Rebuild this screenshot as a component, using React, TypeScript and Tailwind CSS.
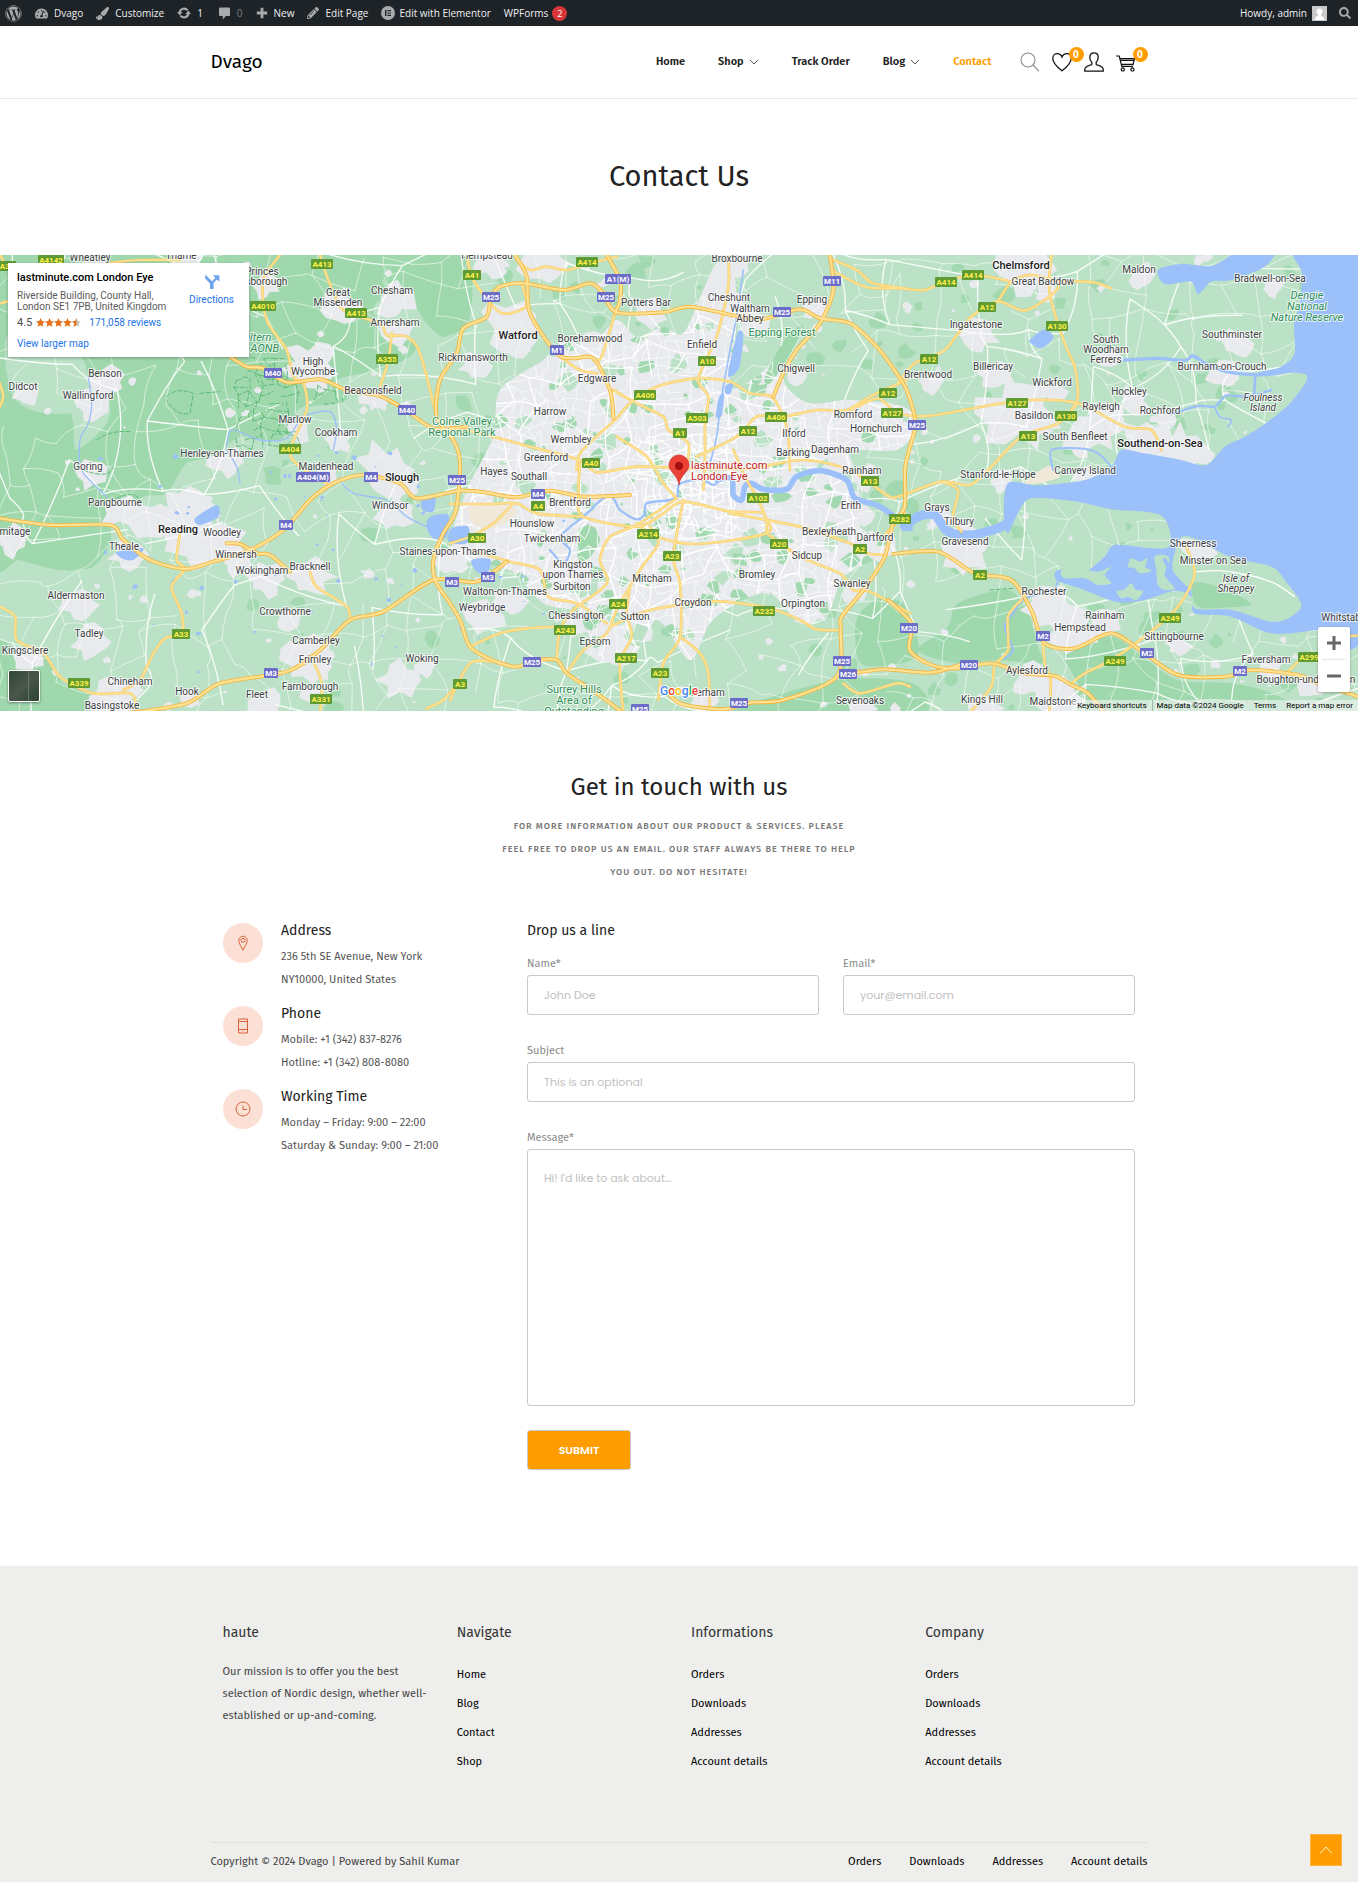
import type { ReactNode } from 'react';
import { FaWordpress, FaTachometerAlt, FaPaintBrush, FaPencilAlt, FaSearch } from 'react-icons/fa';

/* ------------------------------------------------------------------ */
/* Map drawing. Shapes use a 4074 x 1368 space, shown at a third size. */
/* ------------------------------------------------------------------ */

type Pt = [number, number];

/* The map is stored as three sheets that lie side by side. */
const WEST = 0;
const MID = 1350;
const EAST = 2694;

function pts(sheet: number, s: string): Pt[] {
  return s.split(' ').map((p) => {
    const [x, y] = p.split(',').map(Number);
    return [x + sheet, y] as Pt;
  });
}

function smooth(list: Pt[], closed = false): string {
  const n = list.length;
  const at = (i: number): Pt => (closed ? list[(i + n) % n] : list[Math.max(0, Math.min(n - 1, i))]);
  let d = `M${list[0][0]} ${list[0][1]}`;
  const last = closed ? n : n - 1;
  for (let i = 0; i < last; i++) {
    const [a, b, c, e] = [at(i - 1), at(i), at(i + 1), at(i + 2)];
    d += `C${Math.round(b[0] + (c[0] - a[0]) / 7)} ${Math.round(b[1] + (c[1] - a[1]) / 7)} ${Math.round(
      c[0] - (e[0] - b[0]) / 7,
    )} ${Math.round(c[1] - (e[1] - b[1]) / 7)} ${c[0]} ${c[1]}`;
  }
  return closed ? d + 'Z' : d;
}

function makeRandom(seed: number) {
  let s = seed;
  return () => {
    s = (s * 1664525 + 1013904223) % 4294967296;
    return s / 4294967296;
  };
}

function blob(cx: number, cy: number, r: number, rnd: () => number, n = 11): string {
  let d = '';
  for (let i = 0; i < n; i++) {
    const a = (i / n) * Math.PI * 2;
    const k = r * (0.55 + rnd() * 0.65);
    d += `${i ? 'L' : 'M'}${Math.round(cx + Math.cos(a) * k * 1.15)} ${Math.round(cy + Math.sin(a) * k)}`;
  }
  return d + 'Z';
}

function net(x0: number, y0: number, x1: number, y1: number, step: number, rnd: () => number, keep: number): string {
  const cols = Math.ceil((x1 - x0) / step) + 1;
  const rows = Math.ceil((y1 - y0) / step) + 1;
  const g: Pt[][] = [];
  for (let r = 0; r < rows; r++) {
    g.push([]);
    for (let c = 0; c < cols; c++) {
      g[r].push([
        Math.round(x0 + c * step + (rnd() - 0.5) * step * 0.9),
        Math.round(y0 + r * step + (rnd() - 0.5) * step * 0.9),
      ]);
    }
  }
  let d = '';
  const link = (a: Pt, b: Pt) => {
    if (rnd() > keep) return;
    const mx = Math.round((a[0] + b[0]) / 2 + (rnd() - 0.5) * step * 0.4);
    const my = Math.round((a[1] + b[1]) / 2 + (rnd() - 0.5) * step * 0.4);
    d += `M${a[0]} ${a[1]}Q${mx} ${my} ${b[0]} ${b[1]}`;
  };
  for (let r = 0; r < rows; r++)
    for (let c = 0; c < cols; c++) {
      if (c + 1 < cols) link(g[r][c], g[r][c + 1]);
      if (r + 1 < rows) link(g[r][c], g[r + 1][c]);
    }
  return d;
}

const london = smooth(
  pts(
    MID,
    '150,420 280,330 340,270 420,290 500,210 560,260 640,230 700,250 760,120 800,40 850,60 860,200 850,400 920,380 980,330 1010,410 1080,460 1200,450 1360,470 1400,530 1340,600 1200,600 1100,650 1220,700 1230,830 1320,870 1290,920 1180,980 1130,1100 1050,1120 960,1030 860,1060 780,1120 720,1230 620,1110 540,1240 450,1220 380,1090 280,1060 180,960 40,930 10,840 60,700 130,560',
  ),
  true,
);

const darkLand: string[] = [
  smooth(pts(WEST, '0,0 1130,0 1150,100 1250,280 1170,350 1010,390 1040,450 900,480 840,570 720,560 640,620 560,640 500,730 430,740 340,800 330,880 280,950 180,960 60,930 -20,900 -20,0'), true),
  smooth(pts(WEST, '1150,0 1390,0 1410,200 1330,260 1260,200 1190,150'), true),
  smooth(pts(WEST, '-20,1180 60,1200 130,1215 190,1300 280,1330 230,1390 -20,1400'), true),
  smooth(pts(EAST, '180,1060 330,1020 390,1090 420,1190 430,1240 300,1230 180,1240 60,1200 150,1130'), true),
  smooth(pts(EAST, '500,1200 640,1160 740,1225 840,1290 1000,1300 1120,1330 1200,1400 600,1400 540,1300'), true),
  smooth(pts(EAST, '885,1000 960,1010 1060,1070 1000,1080 900,1080'), true),
  smooth(pts(MID, '1230,1090 1290,1045 1370,1070 1400,1220 1240,1245 1215,1150'), true),
  smooth(pts(MID, '880,1370 1160,1290 1390,1300 1400,1400 880,1400'), true),
  smooth(pts(MID, '385,840 430,830 450,870 420,920 385,930'), true),
  smooth(pts(MID, '1010,260 1060,230 1010,330 960,400 945,380'), true),
];

const paleLand: string[] = [
  smooth(pts(WEST, '20,260 150,250 250,330 260,470 140,490 40,440'), true),
  smooth(pts(WEST, '210,420 320,440 320,520 230,600 220,520'), true),
  smooth(pts(WEST, '1180,130 1260,190 1280,270 1180,260 1120,180'), true),
];

const lakes: string[] = [
  smooth(pts(WEST, '1265,745 1305,738 1300,785 1268,780'), true),
  smooth(pts(WEST, '1290,800 1345,795 1340,860 1300,865 1280,830'), true),
  smooth(pts(WEST, '350,905 430,895 400,930 365,925'), true),
  smooth(pts(WEST, '585,805 650,765 655,800 600,825'), true),
  smooth(pts(MID, '65,930 120,928 112,968 80,965'), true),
  smooth(pts(MID, '5,835 55,830 50,880 -5,875'), true),
  smooth(pts(MID, '862,250 880,255 868,350 842,380 835,365'), true),
  smooth(pts(MID, '826,408 850,398 842,430 826,430'), true),
  smooth(pts(MID, '806,445 822,430 816,495 798,500'), true),
  smooth(pts(EAST, '395,270 440,238 466,262 432,295 402,282'), true),
];

const sea: string[] = [
  smooth(
    pts(
      EAST,
      '1400,-10 1190,-5 1212,70 1205,160 1188,220 1190,310 1150,350 1080,370 1225,374 1180,455 1100,522 1040,560 980,590 925,645 850,630 740,610 670,600 640,650 560,690 420,706 330,700 318,800 330,850 360,790 400,745 540,755 640,778 780,792 815,840 812,890 760,895 650,885 620,920 560,965 480,960 476,990 560,1020 660,1057 740,1050 830,1022 880,1040 890,1090 1000,1100 1120,1150 1260,1140 1400,1120',
    ),
    true,
  ),
  smooth(pts(EAST, '1130,0 1100,50 1000,90 940,95 900,132 880,95 800,102 780,60 850,42 940,48 1000,15 1040,0'), true),
];

const islands: string[] = [
  smooth(pts(EAST, '850,862 900,870 1000,922 1120,950 1162,992 1210,1062 1180,1100 1120,1115 1000,1080 890,1075 878,1020 830,980 825,930'), true),
  smooth(pts(EAST, '700,925 725,935 750,925 742,950 760,962 725,970 710,955 690,950'), true),
  smooth(pts(EAST, '770,920 800,915 815,930 800,975 830,1015 800,1020 780,1005 775,960'), true),
  smooth(pts(EAST, '490,962 540,955 600,965 640,950 620,975 640,1000 600,1005 560,985 500,985'), true),
  smooth(pts(EAST, '655,1025 680,1018 700,1000 712,1018 735,1025 715,1050 690,1040 670,1045'), true),
];

const rivers: { d: string; w: number }[] = [
  { d: smooth(pts(MID, '300,900 340,940 360,900 330,860 400,800 460,745 490,745 510,780 560,808 585,790 590,760 660,750 682,740 686,705 720,692 760,690 790,705 810,690')), w: 7 },
  { d: smooth(pts(MID, '800,690 845,685 850,735 875,750 885,710 905,700 940,718 1010,718 1040,680 1110,662 1190,690 1215,745 1290,770 1380,835')), w: 17 },
  { d: smooth(pts(EAST, '20,830 60,800 110,795 150,845 220,855 290,838 330,820')), w: 28 },
  { d: smooth(pts(EAST, '680,330 780,325 860,332 885,318 930,345 1000,368 1100,374 1180,362')), w: 10 },
  { d: smooth(pts(EAST, '820,492 900,468 950,470 985,437 1050,440 1120,420')), w: 7 },
  { d: smooth(pts(EAST, '950,470 965,500 1000,510 990,530')), w: 5 },
  { d: smooth(pts(EAST, '1072,375 1068,440')), w: 8 },
  { d: smooth(pts(EAST, '640,650 600,610 540,595 460,600 465,660')), w: 6 },
  { d: smooth(pts(EAST, '480,990 465,1020 380,1045 345,1090 320,1130 345,1200 320,1225')), w: 6 },
  { d: smooth(pts(WEST, '265,380 275,460 265,520 240,570 245,660 320,740')), w: 4 },
  { d: smooth(pts(WEST, '680,590 695,540 780,570 860,565 910,500 990,485 1010,540 1000,600')), w: 4 },
  { d: smooth(pts(WEST, '720,700 710,650 680,600')), w: 4 },
  { d: smooth(pts(WEST, '1020,690 1060,730 1160,750 1220,800 1280,830')), w: 4 },
  { d: smooth(pts(MID, '880,60 870,130 860,200 840,300 815,440 800,560 780,640')), w: 5 },
  { d: smooth(pts(EAST, '800,930 830,980 870,1020')), w: 12 },
];

const motorways: string[] = [
  smooth(pts(WEST, '690,320 740,350 790,355 860,397 960,388 1040,420 1140,438 1220,482 1300,535 1400,530')),
  smooth(pts(MID, '120,140 110,200 40,235 20,310 -30,390 -40,500 10,570 28,620 28,700 15,790 -20,850 -48,920 -45,990 0,1060 30,1110 60,1190 130,1232 200,1250 250,1232 320,1230 350,1270 440,1330 520,1390')),
  smooth(pts(MID, '640,1310 690,1360 820,1378 900,1358 1000,1350 1160,1280 1172,1140 1175,1100 1240,1020 1300,930 1315,880 1330,820 1364,770 1366,650 1394,540 1394,500 1370,420 1340,370 1280,290 1200,220 1110,205 1050,178 940,207 870,200 720,170 640,187 500,187 460,130 420,100 340,120 220,100 150,110 120,140')),
  smooth(pts(MID, '195,15 230,80 240,190 320,310 370,325 430,325 480,420 490,505')),
  smooth(pts(MID, '470,15 510,90 510,150 495,190')),
  smooth(pts(MID, '1140,15 1150,120 1110,220 1040,300 1000,370 970,440')),
  smooth(pts(WEST, '0,805 150,825 330,825 370,870 450,930 555,957 640,935 750,900 850,840 930,750 1000,700 1090,675 1200,700 1250,745 1380,722 1460,728 1550,742 1650,722 1750,740 1890,735')),
  smooth(pts(WEST, '380,1390 560,1360 660,1300 860,1265 960,1200 1050,1110 1150,1085 1300,990 1430,995 1520,935')),
  smooth(pts(EAST, '-30,1050 40,1120 35,1200 100,1245 180,1255 280,1240 380,1270 470,1278 520,1305 570,1330 620,1390')),
  smooth(pts(MID, '1180,1275 1300,1258 1440,1268 1530,1245')),
  smooth(pts(MID, '1330,912 1464,905 1574,970 1684,990 1744,1080 1784,1180 1874,1195 1984,1150 2084,1210 2184,1275 2324,1280 2404,1260 2544,1275 2604,1300 2724,1340')),
  smooth(pts(WEST, '680,880 720,882 770,910 810,915 870,965')),
];

const aRoads: string[] = [
  smooth(pts(WEST, '0,1070 45,1100 50,1170 130,1210 180,1280 280,1330 390,1330 410,1370')),
  smooth(pts(WEST, '540,850 530,930 555,957 515,1010 545,1090 545,1150 495,1165 460,1210 420,1290 370,1320')),
  smooth(pts(WEST, '840,15 790,90 800,210 860,300 880,380 910,400 920,480 870,600 900,650 980,700')),
  smooth(pts(WEST, '960,15 985,90 1030,180 1140,220 1160,255 1220,260 1260,310 1310,500')),
  smooth(pts(WEST, '1175,250 1165,330 1140,410')),
  smooth(pts(WEST, '930,965 950,1010 1040,1070 1050,1110')),
  smooth(pts(WEST, '940,1235 965,1300 960,1390')),
  smooth(pts(WEST, '0,15 20,50')),
  smooth(pts(WEST, '0,400 10,440 0,470')),
  smooth(pts(WEST, '0,160 40,150')),
  smooth(pts(WEST, '330,38 420,30 540,30')),
  smooth(pts(WEST, '1380,1290 1330,1350 1280,1375')),
  smooth(pts(EAST, '0,400 50,340 140,300 220,200 300,155 380,182 460,135 480,100 400,75 340,95 300,155')),
  smooth(pts(EAST, '-200,60 -100,110 0,115 80,120 140,95 230,75 340,95')),
  smooth(pts(EAST, '480,95 560,95 600,100 640,115')),
  smooth(pts(EAST, '460,15 455,130 500,280 530,350 540,440 520,480')),
  smooth(pts(EAST, '-140,480 -60,445 0,490 100,497 280,465 400,450 540,460 680,530 760,540 790,600')),
  smooth(pts(MID, '700,655 900,655 1060,630 1200,660 1310,735 1344,740 1474,695 1560,705 1624,650 1714,560 1824,520 1884,460')),
  smooth(pts(EAST, '130,695 180,720 165,800 190,845')),
  smooth(pts(EAST, '860,880 890,970 840,1070 740,1160 640,1230 560,1270 520,1300')),
  smooth(pts(EAST, '370,1050 330,1100 330,1200 290,1245 280,1310 220,1383')),
  smooth(pts(EAST, '435,1180 440,1240 458,1290 455,1383')),
  smooth(pts(EAST, '1200,1235 1160,1275')),
  smooth(pts(EAST, '1330,1160 1400,1155')),
  smooth(pts(MID, '380,660 390,610 450,550 500,505 540,460 620,410 740,385 840,395 900,430 965,440 1000,500 1015,560 1020,660')),
  smooth(pts(MID, '835,15 835,110 800,260 745,385 775,440 765,520 765,620 760,720')),
  smooth(pts(MID, '0,530 130,560 240,590 390,630 440,667 560,650 690,655')),
  smooth(pts(MID, '490,420 560,460 640,500 655,540 715,580 710,650')),
  smooth(pts(MID, '740,620 860,560 920,500 1000,500 1100,480 1190,480 1260,440 1370,390')),
  smooth(pts(MID, '390,640 385,730 400,800 560,830 640,790 700,755 840,785 940,790 950,850')),
  smooth(pts(MID, '560,820 620,860 740,882 950,850 945,800 920,740 890,690 850,600')),
  smooth(pts(MID, '680,745 560,825 480,860 450,930 470,1000 370,1080 330,1140 320,1230')),
  smooth(pts(MID, '700,750 670,920 690,1000 690,1160 640,1240 625,1350')),
  smooth(pts(MID, '600,830 625,880 570,960 500,1080 470,1150 400,1200 350,1270')),
  smooth(pts(MID, '540,1010 530,1090 545,1160 510,1240 520,1390')),
  smooth(pts(MID, '480,1130 600,1080 780,1055 870,1060 960,1075 1050,1110 1100,1138 1170,1140')),
  smooth(pts(MID, '690,1160 750,1210 775,1270 780,1390')),
  smooth(pts(MID, '950,850 1050,920 1170,970 1210,1020 1260,1025 1380,1090')),
  smooth(pts(MID, '840,790 1050,830 1200,880 1250,910 1310,915')),
  smooth(pts(MID, '0,1350 60,1240 130,1235')),
  smooth(pts(MID, '50,15 70,90 140,180 180,190 230,165 215,100')),
  smooth(pts(MID, '200,30 240,60 290,50 350,60 420,40 500,20')),
  smooth(pts(MID, '1150,30 1220,60 1270,100 1370,115')),
  smooth(pts(MID, '0,762 120,762 200,760 260,790 400,800')),
  smooth(pts(MID, '190,760 130,820 60,860 0,880')),
  smooth(pts(MID, '60,900 180,935 270,960 295,1040 380,1060 470,1120')),
  smooth(pts(MID, '60,1190 150,1150 230,1135 330,1130')),
  smooth(pts(MID, '495,190 455,320 430,330')),
  smooth(pts(MID, '330,320 390,360 440,370')),
  smooth(pts(MID, '500,560 590,620 640,700 680,745')),
  smooth(pts(MID, '1180,1300 1230,1330 1340,1300 1380,1310')),
  smooth(pts(MID, '1364,790 1300,860')),
];

type Label = [string, number, number, number];

/* text, sheet, centre x, centre y; a bar in the text starts a new line */
const towns: Label[] = [
  ['Wheatley', WEST, 270, 20], ['Thame', WEST, 543, 16], ['Princes|Risborough', WEST, 785, 78], ['Great|Missenden', WEST, 1015, 140],
  ['Chesham', WEST, 1175, 121], ['Amersham', WEST, 1184, 217], ['Benson', WEST, 315, 368], ['Didcot', WEST, 68, 407],
  ['Wallingford', WEST, 263, 435], ['High|Wycombe', WEST, 938, 349], ['Beaconsfield', WEST, 1118, 421], ['Marlow', WEST, 886, 507],
  ['Cookham', WEST, 1008, 546], ['Henley-on-Thames', WEST, 666, 608], ['Goring', WEST, 264, 647], ['Maidenhead', WEST, 979, 649],
  ['Pangbourne', WEST, 344, 757], ['Woodley', WEST, 667, 846], ['Hermitage', WEST, 22, 844], ['Theale', WEST, 372, 887],
  ['Winnersh', WEST, 708, 911], ['Wokingham', WEST, 787, 961], ['Bracknell', WEST, 930, 949], ['Windsor', WEST, 1170, 764],
  ['Aldermaston', WEST, 229, 1036], ['Crowthorne', WEST, 854, 1084], ['Tadley', WEST, 267, 1148], ['Camberley', WEST, 947, 1170],
  ['Kingsclere', WEST, 75, 1199], ['Frimley', WEST, 946, 1226], ['Woking', WEST, 1265, 1223], ['Chineham', WEST, 391, 1293],
  ['Hook', WEST, 562, 1324], ['Fleet', WEST, 771, 1333], ['Farnborough', WEST, 929, 1307], ['Basingstoke', WEST, 337, 1365],
  ['Hempstead', MID, 110, 14], ['Broxbourne', MID, 860, 24], ['Cheshunt', MID, 836, 140], ['Potters Bar', MID, 589, 157],
  ['Waltham|Abbey', MID, 901, 188], ['Epping', MID, 1087, 146], ['Enfield', MID, 756, 281], ['Borehamwood', MID, 420, 265],
  ['Rickmansworth', MID, 68, 320], ['Chigwell', MID, 1037, 353], ['Edgware', MID, 440, 385], ['Harrow', MID, 299, 484],
  ['Romford', MID, 1209, 493], ['Hornchurch', MID, 1278, 534], ['Wembley', MID, 362, 567], ['Ilford', MID, 1031, 550],
  ['Greenford', MID, 289, 620], ['Barking', MID, 1029, 606], ['Dagenham', MID, 1155, 597], ['Hayes', MID, 131, 664],
  ['Southall', MID, 237, 678], ['Rainham', MID, 1236, 659], ['Brentford', MID, 361, 755], ['Erith', MID, 1202, 764],
  ['Hounslow', MID, 245, 820], ['Bexleyheath', MID, 1138, 842], ['Twickenham', MID, 305, 863], ['Dartford', MID, 1276, 860],
  ['Staines-upon-Thames', MID, -6, 902], ['Sidcup', MID, 1072, 916], ['Kingston|upon Thames', MID, 370, 957], ['Surbiton', MID, 366, 1008],
  ['Mitcham', MID, 605, 983], ['Bromley', MID, 920, 973], ['Swanley', MID, 1206, 1000], ['Walton-on-Thames', MID, 166, 1024],
  ['Weybridge', MID, 95, 1070], ['Croydon', MID, 729, 1055], ['Orpington', MID, 1060, 1060], ['Chessington', MID, 378, 1094],
  ['Sutton', MID, 556, 1098], ['Epsom', MID, 434, 1172], ['Caterham', MID, 758, 1326], ['Sevenoaks', MID, 1229, 1349],
  ['Great Baddow', EAST, 436, 92], ['Maldon', EAST, 724, 56], ['Bradwell-on-Sea', EAST, 1115, 83], ['Ingatestone', EAST, 233, 222],
  ['Southminster', EAST, 1001, 253], ['South|Woodham|Ferrers', EAST, 625, 298], ['Burnham-on-Crouch', EAST, 973, 349], ['Billericay', EAST, 285, 349],
  ['Brentwood', EAST, 90, 371], ['Wickford', EAST, 461, 397], ['Hockley', EAST, 694, 423], ['Rayleigh', EAST, 609, 467],
  ['Rochford', EAST, 785, 479], ['Basildon', EAST, 408, 495], ['South Benfleet', EAST, 530, 558], ['Canvey Island', EAST, 561, 661],
  ['Stanford-le-Hope', EAST, 301, 671], ['Grays', EAST, 118, 770], ['Tilbury', EAST, 182, 813], ['Gravesend', EAST, 201, 873],
  ['Sheerness', EAST, 886, 878], ['Minster on Sea', EAST, 944, 930], ['Rochester', EAST, 437, 1024], ['Rainham', EAST, 620, 1094],
  ['Hempstead', EAST, 547, 1130], ['Sittingbourne', EAST, 829, 1159], ['Whitstable', EAST, 1340, 1101], ['Faversham', EAST, 1104, 1226],
  ['Aylesford', EAST, 388, 1260], ['Boughton-under-Blean', EAST, 1225, 1288], ['Kings Hill', EAST, 251, 1346], ['Maidstone', EAST, 464, 1353],
];

const cities: Label[] = [
  ['Reading', WEST, 535, 837], ['Slough', WEST, 1206, 681], ['Watford', MID, 203, 255], ['Chelmsford', EAST, 370, 46], ['Southend-on-Sea', EAST, 787, 580],
];

const parks: Label[] = [
  ['Colne Valley|Regional Park', MID, 37, 530], ['Epping Forest', MID, 995, 247], ['Surrey Hills|Area of|Outstanding', MID, 371, 1351],
];

const naturePlaces: Label[] = [['Chiltern|Hills AONB', WEST, 758, 280], ['Dengie|National|Nature Reserve', EAST, 1228, 167]];

const isles: Label[] = [['Foulness|Island', EAST, 1096, 455], ['Isle of|Sheppey', EAST, 1014, 1000]];

const shields: Label[] = [
  ['A34', WEST, 20, 47], ['A4142', WEST, 154, 31], ['A413', WEST, 966, 41], ['A4010', WEST, 790, 168], ['A413', WEST, 1067, 190],
  ['A355', WEST, 1160, 327], ['A404', WEST, 869, 596], ['A33', WEST, 544, 1151], ['A339', WEST, 236, 1300], ['A331', WEST, 962, 1348],
  ['A41', MID, 66, 74], ['A414', MID, 411, 37], ['A10', MID, 772, 334], ['A406', MID, 584, 434], ['A503', MID, 740, 504],
  ['A406', MID, 977, 502], ['A12', MID, 894, 543], ['A1', MID, 689, 550], ['A40', MID, 424, 639], ['A12', MID, 1313, 428],
  ['A127', MID, 1326, 488], ['A13', MID, 1259, 694], ['A102', MID, 925, 744], ['A4', MID, 264, 767], ['A30', MID, 82, 865],
  ['A214', MID, 593, 853], ['A23', MID, 667, 918], ['A20', MID, 986, 881], ['A2', MID, 1229, 896], ['A282', MID, 1350, 808],
  ['A24', MID, 503, 1062], ['A232', MID, 942, 1082], ['A243', MID, 346, 1140], ['A217', MID, 527, 1225], ['A23', MID, 630, 1270], ['A3', MID, 31, 1301],
  ['A414', EAST, 145, 96], ['A414', EAST, 224, 76], ['A12', EAST, 267, 172], ['A130', EAST, 478, 227], ['A12', EAST, 94, 327],
  ['A127', EAST, 358, 460], ['A130', EAST, 504, 499], ['A13', EAST, 390, 558], ['A2', EAST, 246, 975], ['A249', EAST, 815, 1103],
  ['A249', EAST, 650, 1232], ['A299', EAST, 1232, 1222],
  ['M40', WEST, 819, 369], ['M40', WEST, 1222, 480], ['A404(M)', WEST, 940, 681], ['M4', WEST, 1114, 682], ['M4', WEST, 858, 826],
  ['M3', WEST, 1356, 995], ['M3', WEST, 814, 1269], ['M25', MID, 123, 140], ['A1(M)', MID, 504, 88], ['M25', MID, 467, 141],
  ['M25', MID, 996, 185], ['M11', MID, 1146, 92], ['M1', MID, 321, 300], ['M25', MID, 22, 691], ['M4', MID, 264, 732],
  ['M3', MID, 114, 980], ['M25', MID, 247, 1235], ['M25', MID, 866, 1360], ['M25', MID, 569, 1378], ['M25', MID, 1176, 1232],
  ['M26', MID, 1195, 1271], ['M25', EAST, 57, 525], ['M20', EAST, 33, 1134], ['M20', EAST, 212, 1245], ['M2', EAST, 434, 1158],
  ['M2', EAST, 746, 1209], ['M2', EAST, 1027, 1262],
];

const rnd = makeRandom(20247);
const farLanes = net(0, 15, 4074, 1383, 88, rnd, 0.7);
const farRoads = net(0, 15, 4074, 1383, 170, rnd, 0.55);
const cityLanes = net(1360, 150, 2750, 1250, 34, rnd, 0.72);
const cityRoads = net(1360, 150, 2750, 1250, 76, rnd, 0.75);
const centreLanes = net(1920, 560, 2200, 840, 22, rnd, 0.7);

const townBlobs = towns
  .concat(cities)
  .map(([, s, x, y]) => blob(s + x + 10, y + 28, 30 + rnd() * 26, rnd, 13))
  .concat([
    blob(560, 800, 80, rnd, 17), blob(590, 870, 80, rnd, 15), blob(450, 810, 60, rnd, 12), blob(930, 340, 70, rnd, 15), blob(930, 980, 62, rnd, 14),
    blob(1160, 660, 85, rnd, 16), blob(920, 1230, 70, rnd, 14), blob(1540, 220, 90, rnd, 16), blob(3070, 60, 75, rnd, 14), blob(3060, 490, 110, rnd, 16),
    blob(3440, 580, 80, rnd, 16), blob(3540, 600, 80, rnd, 16), blob(3290, 540, 70, rnd, 13), blob(3160, 1080, 80, rnd, 16), blob(3200, 1140, 60, rnd, 12),
    blob(2890, 920, 60, rnd, 12), blob(1640, 40, 70, rnd, 13), blob(1200, 1290, 60, rnd, 12), blob(3180, 1350, 70, rnd, 13), blob(340, 1340, 70, rnd, 14),
  ])
  .join('');

const scatter = (count: number, x0: number, x1: number, y0: number, y1: number, lo: number, hi: number) => {
  let d = '';
  for (let i = 0; i < count; i++) d += blob(x0 + rnd() * (x1 - x0), y0 + rnd() * (y1 - y0), lo + rnd() * hi, rnd, 8);
  return d;
};
const woods = scatter(170, 600, 4000, 20, 1380, 6, 24);
const cityParks = scatter(170, 1400, 2720, 180, 1240, 5, 20);
const paleParks = scatter(70, 1400, 2720, 180, 1240, 8, 26);
const hamlets = scatter(150, 0, 3900, 20, 1380, 4, 12);
const ponds = scatter(60, 300, 1700, 600, 1300, 2, 6);

const trails = [
  net(710, 380, 870, 580, 26, rnd, 0.6),
  net(900, 390, 1010, 460, 26, rnd, 0.5),
  net(750, 320, 860, 380, 26, rnd, 0.5),
  'M500 440Q530 410 580 430L570 490Q530 500 500 450M600 430L660 425M290 570Q330 540 390 545M250 660Q330 690 340 650M350 745Q400 720 420 750L400 770M2970 1020L3040 1015',
].join('');

const px = (sheet: number, x: number) => Math.round((sheet + x) / 3);
const py = (y: number) => Math.round(y / 3) - 5;

function MapText({ items, className, size, line }: { items: Label[]; className: string; size: number; line: number }) {
  return (
    <g
      className={className}
      fontSize={size}
      textAnchor="middle"
      stroke="#ffffff"
      strokeOpacity={0.75}
      strokeWidth={2}
      strokeLinejoin="round"
      paintOrder="stroke"
    >
      {items.map(([label, s, x, y], i) => {
        const rows = label.split('|');
        const top = py(y) + 4 - Math.round(((rows.length - 1) * line) / 2);
        return rows.map((row, r) => (
          <text key={`${i}-${r}`} x={px(s, x)} y={top + r * line}>
            {row}
          </text>
        ));
      })}
    </g>
  );
}

function MapDrawing() {
  return (
    <svg
      className="block h-full w-full font-[Roboto,sans-serif]"
      viewBox="0 0 1358 456"
      preserveAspectRatio="xMidYMid slice"
      role="img"
      aria-label="Map of London and its surroundings"
    >
      <defs>
        <clipPath id="city">
          <path d={london} />
        </clipPath>
      </defs>
      <g transform="translate(0 -5) scale(0.33333)" fill="none" strokeLinecap="round" strokeLinejoin="round">
        <rect x="0" y="0" width="4074" height="1390" fill="#bbe2c6" />
        <path d={darkLand.join('')} fill="#a0d8ae" />
        <path d={paleLand.join('')} fill="#bbe2c6" />
        <path d={woods} fill="#a3d9b1" />
        <path d={townBlobs + hamlets} fill="#e8eaed" />
        <path d={farLanes} stroke="#ffffff" strokeOpacity="0.55" strokeWidth="3" />
        <path d={farRoads} stroke="#ffffff" strokeOpacity="0.9" strokeWidth="4" />
        <path d={trails} stroke="#5bb974" strokeWidth="3" strokeDasharray="12 7" />
        <path d={london} fill="#e8eaed" />
        <g clipPath="url(#city)">
          <path d={paleParks} fill="#bbe2c6" />
          <path d={cityParks} fill="#a3d9b1" />
          <path d={darkLand[8] + darkLand[9]} fill="#a0d8ae" />
          <path d={cityLanes} stroke="#f7f8f9" strokeWidth="3" />
          <path d={cityRoads} stroke="#ffffff" strokeWidth="4" />
          <path d={centreLanes} stroke="#ffffff" strokeWidth="4" />
        </g>
        <path d={smooth(pts(MID, '55,775 100,765 190,772 192,800 125,835 70,822'), true)} fill="#f0e8d8" />
        <path d={smooth(pts(EAST, '380,698 450,648 485,680 420,700'), true)} fill="#f0e8d8" />
        <path d={ponds} fill="#9cc0f9" />
        <path d={lakes.join('')} fill="#9cc0f9" />
        <path d={sea.join('')} fill="#9cc0f9" />
        <path d={islands.join('')} fill="#bbe2c6" />
        <path d={smooth(pts(EAST, '885,1000 960,1010 1060,1060 1000,1072 900,1070'), true)} fill="#a0d8ae" />
        <path d={smooth(pts(EAST, '800,600 870,580 950,610 922,642 850,628 740,608 700,590'), true)} fill="#e8eaed" />
        <path d={smooth(pts(EAST, '850,866 900,874 960,910 900,930 850,900'), true)} fill="#e8eaed" />
        <path d={smooth(pts(EAST, '893,965 960,962 1050,975 1130,1000 1190,1040'))} stroke="#ffffff" strokeWidth="4" />
        {rivers.map((r, i) => (
          <path key={i} d={r.d} stroke="#9cc0f9" strokeWidth={r.w} />
        ))}
        <path d={aRoads.join('')} stroke="#f9c95c" strokeWidth="8" />
        <path d={aRoads.join('')} stroke="#fde293" strokeWidth="5" />
        <path d={motorways.join('')} stroke="#f5b43c" strokeWidth="12" />
        <path d={motorways.join('')} stroke="#fde293" strokeWidth="7" />
      </g>
      <g fontSize="8" fontWeight="700" textAnchor="middle">
        {shields.map(([label, s, x, y], i) => {
          const blue = label[0] === 'M' || label.endsWith('(M)');
          const w = label.length * 4 + 6;
          return (
            <g key={i}>
              <rect x={px(s, x) - w / 2} y={py(y) - 5} width={w} height="10" rx="1" fill={blue ? '#6c6cc9' : '#5f9a32'} />
              <text x={px(s, x)} y={py(y) + 3} fill={blue ? '#ffffff' : '#fff04a'}>
                {label}
              </text>
            </g>
          );
        })}
      </g>
      <MapText items={towns} className="fill-[#3c4043]" size={10} line={10} />
      <MapText items={cities} className="fill-[#202124] font-medium" size={11} line={11} />
      <MapText items={parks} className="fill-[#2f8f57]" size={11} line={11} />
      <MapText items={naturePlaces} className="fill-[#2f8f57] italic" size={11} line={11} />
      <MapText items={isles} className="fill-[#3c4043] italic" size={10} line={10} />
      <g fontSize="12" className="font-medium" stroke="#ffffff" strokeWidth="2" strokeLinejoin="round" paintOrder="stroke">
        <text x="660" y="440">
          <tspan fill="#4285f4">G</tspan>
          <tspan fill="#ea4335">o</tspan>
          <tspan fill="#fbbc04">o</tspan>
          <tspan fill="#4285f4">g</tspan>
          <tspan fill="#34a853">l</tspan>
          <tspan fill="#ea4335">e</tspan>
        </text>
      </g>
      <path d="M679 230C678 220 669 217 669 210A10 10 0 0 1 689 210C689 217 680 220 679 230Z" fill="#ea4335" stroke="#c5221f" strokeWidth="0.6" />
      <circle cx="679" cy="211" r="4" fill="#a50e0e" />
      <g fontSize="11" fill="#c5221f" stroke="#ffffff" strokeOpacity="0.8" strokeWidth="2" strokeLinejoin="round" paintOrder="stroke">
        <text x="691" y="214">lastminute.com</text>
        <text x="691" y="225">London Eye</text>
      </g>
    </svg>
  );
}

function Star({ half = false }: { half?: boolean }) {
  const star = 'M5 0L6.5 3.4L10 3.8L7.4 6.2L8.1 9.8L5 8L1.9 9.8L2.6 6.2L0 3.8L3.5 3.4Z';
  return (
    <svg viewBox="0 0 10 10" className="h-[9px] w-[9px]" aria-hidden="true">
      <path d={star} fill={half ? '#c4c4c4' : '#e7711b'} />
      {half && <path d="M5 0L3.5 3.4L0 3.8L2.6 6.2L1.9 9.8L5 8Z" fill="#e7711b" />}
    </svg>
  );
}

function MapSection() {
  return (
    <section className="relative h-[456px] overflow-hidden bg-[#bbe2c6] font-[Roboto,sans-serif]" aria-label="Map">
      <MapDrawing />
      <div className="absolute top-2 left-2 flex h-[94px] w-[241px] justify-between bg-white pt-2 pr-[15px] pl-[9px] shadow-[0_1px_3px_rgba(0,0,0,0.3)]">
        <div className="text-[10px] leading-[11px]">
          <h2 className="text-[11px] leading-[14px] font-medium text-black">lastminute.com London Eye</h2>
          <p className="mt-[5px] text-[#5b5b5b]">
            Riverside Building, County Hall,
            <br />
            London SE1 7PB, United Kingdom
          </p>
          <div className="mt-[5px] flex items-center">
            <span className="text-[11px] text-[#4d4d4d]">4.5</span>
            <span className="ml-1 flex">
              <Star />
              <Star />
              <Star />
              <Star />
              <Star half />
            </span>
            <a href="#reviews" className="ml-2 text-[#1a73e8]">
              171,058 reviews
            </a>
          </div>
          <a href="#map" className="mt-2.5 block text-[#1a73e8]">
            View larger map
          </a>
        </div>
        <a href="#directions" className="mt-0.5 flex h-8 flex-col items-center justify-between text-[10px] leading-[11px] text-[#1a73e8]">
          <svg viewBox="0 0 16 16" className="h-4 w-4" aria-hidden="true">
            <path d="M6 16V10.4L1.2 5.6V1.4L8 8.2L11.4 4.8L8.8 2.2H15.4V8.8L13 6.4L9.6 9.8V16Z" fill="#6ea3ee" />
          </svg>
          Directions
        </a>
      </div>
      <button
        type="button"
        aria-label="Show satellite imagery"
        className="absolute bottom-[9px] left-2 h-8 w-8 rounded-[2px] border border-white bg-linear-to-br from-[#2f4734] via-[#49564a] to-[#2b4430] shadow-[0_1px_3px_rgba(0,0,0,0.4)]"
      >
        <span className="mx-auto block h-full w-px translate-x-1 bg-[#66756a]" />
      </button>
      <div className="absolute right-2 bottom-[19px] flex w-8 flex-col items-center rounded-[2px] bg-white shadow-[0_1px_3px_rgba(0,0,0,0.3)]">
        <button type="button" aria-label="Zoom in" className="flex h-8 w-8 items-center justify-center">
          <svg viewBox="0 0 14 14" className="h-3.5 w-3.5" fill="#666666" aria-hidden="true">
            <path d="M5.5 0H8.5V5.5H14V8.5H8.5V14H5.5V8.5H0V5.5H5.5Z" />
          </svg>
        </button>
        <span className="h-px w-6 bg-[#e6e6e6]" />
        <button type="button" aria-label="Zoom out" className="flex h-8 w-8 items-center justify-center">
          <svg viewBox="0 0 14 14" className="h-3.5 w-3.5" fill="#666666" aria-hidden="true">
            <path d="M0 5.5H14V8.5H0Z" />
          </svg>
        </button>
      </div>
      <div className="absolute right-0 bottom-0 flex h-[11px] items-center bg-[#f5f5f5]/60 text-[8px] leading-[11px] text-black">
        <button type="button" className="px-[5px]">
          Keyboard shortcuts
        </button>
        <span className="border-l border-[#9fbda6] px-1">Map data ©2024 Google</span>
        <a href="#terms" className="px-1.5">
          Terms
        </a>
        <a href="#report" className="pr-[5px] pl-1">
          Report a map error
        </a>
      </div>
    </section>
  );
}

/* ------------------------------------------------------------------ */
/* Admin bar                                                           */
/* ------------------------------------------------------------------ */

function AdminLink({ icon, children, muted = false }: { icon?: ReactNode; children?: ReactNode; muted?: boolean }) {
  return (
    <a href="#admin" className={muted ? 'flex items-center gap-1.5 text-[#7c8085]' : 'flex items-center gap-1.5 text-[#f0f0f1]'}>
      {icon}
      {children}
    </a>
  );
}

function AdminBar() {
  return (
    <nav
      aria-label="Admin toolbar"
      className="flex h-[26px] items-center justify-between bg-[#1d2327] pr-[7px] pl-[5px] font-['Open_Sans','Noto_Sans',sans-serif] text-[10px] leading-none whitespace-nowrap"
    >
      <div className="flex items-center gap-[13px]">
        <a href="#wordpress" aria-label="About WordPress" className="text-[#a7aaad]">
          <FaWordpress className="h-[17px] w-[17px]" />
        </a>
        <AdminLink icon={<FaTachometerAlt className="h-[13px] w-[13px] text-[#a7aaad]" />}>Dvago</AdminLink>
        <AdminLink icon={<FaPaintBrush className="h-[13px] w-[13px] text-[#a7aaad]" />}>Customize</AdminLink>
        <AdminLink
          icon={
            <svg viewBox="0 0 14 12" className="h-3 w-3.5" aria-hidden="true">
              <path d="M2.6 5.5A4.5 4.5 0 0 1 10.6 3.4M11.4 6.5A4.5 4.5 0 0 1 3.4 8.6" fill="none" stroke="#a7aaad" strokeWidth="2" />
              <path d="M0 5H5.4L2.7 8.4ZM8.6 7H14L11.3 3.6Z" fill="#a7aaad" />
            </svg>
          }
        >
          1
        </AdminLink>
        <AdminLink
          muted
          icon={
            <svg viewBox="0 0 13 13" className="ml-0.5 h-[13px] w-[13px]" fill="#a7aaad" aria-hidden="true">
              <path d="M2 0.5H11Q12 0.5 12 1.5V8Q12 9 11 9H7.8L4.8 12.6V9H2Q1 9 1 8V1.5Q1 0.5 2 0.5Z" />
            </svg>
          }
        >
          0
        </AdminLink>
        <AdminLink
          icon={
            <svg viewBox="0 0 12 12" className="h-3 w-3" fill="#a7aaad" aria-hidden="true">
              <path d="M4.6 0.8H7.4V4.6H11.2V7.4H7.4V11.2H4.6V7.4H0.8V4.6H4.6Z" />
            </svg>
          }
        >
          New
        </AdminLink>
        <AdminLink icon={<FaPencilAlt className="h-3 w-3 text-[#a7aaad]" />}>Edit Page</AdminLink>
        <a href="#elementor" className="flex items-center gap-1 text-[#f0f0f1]">
          <svg viewBox="0 0 14 14" className="h-3.5 w-3.5" aria-hidden="true">
            <circle cx="7" cy="7" r="7" fill="#a7aaad" />
            <path d="M4 4H5.4V10H4ZM6.4 4H10V5.3H6.4ZM6.4 6.4H10V7.6H6.4ZM6.4 8.7H10V10H6.4Z" fill="#1d2327" />
          </svg>
          Edit with Elementor
        </a>
        <a href="#wpforms" className="flex items-center gap-1 text-[#f0f0f1]">
          WPForms
          <span className="flex h-[15px] w-[15px] items-center justify-center rounded-full bg-[#d63638] text-[9px] text-white">2</span>
        </a>
      </div>
      <div className="flex items-center gap-3">
        <a href="#profile" className="flex items-center gap-[5px] text-[#f0f0f1]">
          Howdy, admin
          <svg viewBox="0 0 15 15" className="h-[15px] w-[15px]" aria-hidden="true">
            <rect width="15" height="15" fill="#c9c9c9" />
            <circle cx="7.5" cy="5.6" r="3" fill="#ffffff" />
            <path d="M2.5 14Q3 10.5 6 9.5V8H9V9.5Q12 10.5 12.5 14Z" fill="#ffffff" />
          </svg>
        </a>
        <button type="button" aria-label="Search" className="text-[#a7aaad]">
          <FaSearch className="h-3 w-3" />
        </button>
      </div>
    </nav>
  );
}

/* ------------------------------------------------------------------ */
/* Site header                                                         */
/* ------------------------------------------------------------------ */

function Chevron() {
  return (
    <svg viewBox="0 0 10 6" className="h-1.5 w-2.5" fill="none" stroke="#444444" strokeWidth="0.9" aria-hidden="true">
      <path d="M1 1L5 5L9 1" />
    </svg>
  );
}

function Badge() {
  return (
    <span className="absolute -top-[5px] left-[17px] flex h-[15px] w-[15px] items-center justify-center rounded-full bg-[#ff9d00] text-[10px] leading-none font-bold text-white">
      0
    </span>
  );
}

function SiteHeader() {
  return (
    <header className="flex h-[73px] justify-center border-b border-[#e8e8e8] px-5">
      <div className="flex w-full max-w-[937px] items-center justify-between">
        <a href="#home" className="text-[19px] leading-6 text-black">
          Dvago
        </a>
        <div className="flex items-center">
          <nav aria-label="Main" className="flex items-center gap-[33px] text-[11px] leading-4 font-semibold text-[#222222]">
            <a href="#home">Home</a>
            <a href="#shop" className="flex items-center gap-[5px]">
              Shop <Chevron />
            </a>
            <a href="#track">Track Order</a>
            <a href="#blog" className="flex items-center gap-[5px]">
              Blog <Chevron />
            </a>
            <a href="#contact" className="text-[#ff9d00]">
              Contact
            </a>
          </nav>
          <div className="mr-3 ml-7 flex items-center gap-3">
            <button type="button" aria-label="Search">
              <svg viewBox="0 0 20 20" className="h-5 w-5" fill="none" stroke="#8a8a8a" strokeWidth="1.1" aria-hidden="true">
                <circle cx="8" cy="8" r="7" />
                <path d="M13 13L19 19.4" />
              </svg>
            </button>
            <a href="#wishlist" aria-label="Wishlist" className="relative">
              <svg viewBox="0 0 20 20" className="h-5 w-5" fill="none" stroke="#111111" strokeWidth="1.3" aria-hidden="true">
                <path d="M10 18.8C7 16.4 0.8 11.6 0.8 6.4C0.8 3.4 2.9 1.7 5.2 1.7C7.4 1.7 9.2 3 10 5C10.8 3 12.6 1.7 14.8 1.7C17.1 1.7 19.2 3.4 19.2 6.4C19.2 11.6 13 16.4 10 18.8Z" />
              </svg>
              <Badge />
            </a>
            <a href="#account" aria-label="Account">
              <svg viewBox="0 0 20 20" className="h-5 w-5" fill="none" stroke="#111111" strokeWidth="1.3" aria-hidden="true">
                <path d="M7.8 12.4V10.2C6.4 9 5.8 7.2 5.8 5.2C5.8 2.4 7.4 0.8 10 0.8C12.6 0.8 14.2 2.4 14.2 5.2C14.2 7.2 13.6 9 12.2 10.2V12.4C12.2 13.2 19.2 13.8 19.2 17.4V19.2H0.8V17.4C0.8 13.8 7.8 13.2 7.8 12.4Z" />
              </svg>
            </a>
            <a href="#cart" aria-label="Cart" className="relative">
              <svg viewBox="0 0 20 20" className="h-5 w-5" fill="none" stroke="#111111" strokeWidth="1.2" aria-hidden="true">
                <path d="M0 4H3.2L5.8 14.4H17M4 6.6H18.4L17 13M4.4 8.4H18.2M5.2 12.4H17.2" />
                <circle cx="6.8" cy="17.4" r="1.6" />
                <circle cx="16.4" cy="17.4" r="1.6" />
              </svg>
              <Badge />
            </a>
          </div>
        </div>
      </div>
    </header>
  );
}

/* ------------------------------------------------------------------ */
/* Contact details and form                                            */
/* ------------------------------------------------------------------ */

const iconProps = { viewBox: '0 0 16 16', className: 'h-4 w-4', fill: 'none', stroke: '#d5623c', strokeWidth: 1 };

const details: { title: string; lines: string[]; icon: ReactNode }[] = [
  {
    title: 'Address',
    lines: ['236 5th SE Avenue, New York', 'NY10000, United States'],
    icon: (
      <svg {...iconProps} aria-hidden="true">
        <path d="M8 15.2C7 12.4 3.8 9 3.8 5.4A4.2 4.2 0 0 1 12.2 5.4C12.2 9 9 12.4 8 15.2Z" />
        <circle cx="8" cy="5.4" r="2" />
      </svg>
    ),
  },
  {
    title: 'Phone',
    lines: ['Mobile: +1 (342) 837-8276', 'Hotline: +1 (342) 808-8080'],
    icon: (
      <svg {...iconProps} aria-hidden="true">
        <path d="M3.5 1H12.5V15H3.5ZM3.5 3.5H12.5M3.5 11.5H12.5M7.5 13.2H8.5" />
      </svg>
    ),
  },
  {
    title: 'Working Time',
    lines: ['Monday – Friday: 9:00 – 22:00', 'Saturday & Sunday: 9:00 – 21:00'],
    icon: (
      <svg {...iconProps} aria-hidden="true">
        <circle cx="8" cy="8" r="7" />
        <path d="M8 4.5V8.5H12" />
      </svg>
    ),
  },
];

const fieldClass =
  "w-full rounded-[3px] border border-[#c9c9c9] bg-white px-4 font-['Poppins','Lato',sans-serif] text-[11px] text-[#333333] placeholder:text-[#c0c0c0] focus:outline-none";
const labelClass = 'mb-px block text-[11px] leading-5 text-[#8a8a8a]';

function ContactSection() {
  return (
    <section className="flex flex-col items-center px-5 pt-[60px] pb-24">
      <h2 className="text-center text-2xl leading-8 text-[#222222]">Get in touch with us</h2>
      <p className="mt-3 text-center text-[9px] leading-[23px] font-medium tracking-[1px] text-[#777777] uppercase">
        For more information about our product & services. Please
        <br />
        feel free to drop us an email. Our staff always be there to help
        <br />
        you out. Do not hesitate!
      </p>
      <div className="mt-[33px] flex w-full max-w-[912px] gap-10">
        <div className="flex w-[264px] shrink-0 flex-col gap-[9px]">
          {details.map((d) => (
            <div key={d.title} className="flex gap-[18px]">
              <span className="mt-1.5 flex h-10 w-10 shrink-0 items-center justify-center rounded-full bg-[#fde0d5]">{d.icon}</span>
              <div>
                <h3 className="text-sm leading-7 text-[#222222]">{d.title}</h3>
                {d.lines.map((l) => (
                  <p key={l} className="text-[11px] leading-[23px] text-[#555555]">
                    {l}
                  </p>
                ))}
              </div>
            </div>
          ))}
        </div>
        <form className="flex-1" onSubmit={(e) => e.preventDefault()}>
          <h3 className="text-sm leading-7 text-[#222222]">Drop us a line</h3>
          <div className="mt-[9px] grid grid-cols-2 gap-6">
            <div>
              <label htmlFor="name" className={labelClass}>
                Name*
              </label>
              <input id="name" type="text" placeholder="John Doe" className={`${fieldClass} block h-10`} />
            </div>
            <div>
              <label htmlFor="email" className={labelClass}>
                Email*
              </label>
              <input id="email" type="email" placeholder="your@email.com" className={`${fieldClass} block h-10`} />
            </div>
          </div>
          <div className="mt-[26px]">
            <label htmlFor="subject" className={labelClass}>
              Subject
            </label>
            <input id="subject" type="text" placeholder="This is an optional" className={`${fieldClass} block h-10`} />
          </div>
          <div className="mt-[26px]">
            <label htmlFor="message" className={labelClass}>
              Message*
            </label>
            <textarea id="message" placeholder="Hi! I'd like to ask about..." className={`${fieldClass} block h-[257px] resize-none py-5`} />
          </div>
          <button
            type="submit"
            className="mt-6 block h-10 w-[104px] rounded-[3px] border border-[#c9c9c9] bg-[#ff9d00] font-['Poppins','Lato',sans-serif] text-[11px] font-semibold text-white"
          >
            SUBMIT
          </button>
        </form>
      </div>
    </section>
  );
}

/* ------------------------------------------------------------------ */
/* Footer                                                              */
/* ------------------------------------------------------------------ */

const accountLinks = ['Orders', 'Downloads', 'Addresses', 'Account details'];
const columns = [
  { title: 'Navigate', links: ['Home', 'Blog', 'Contact', 'Shop'] },
  { title: 'Informations', links: accountLinks },
  { title: 'Company', links: accountLinks },
];

function SiteFooter() {
  return (
    <footer className="relative flex justify-center bg-[#eeeeec] px-5 pt-[55px] text-[11px] text-black">
      <div className="w-full max-w-[937px]">
        <div className="grid grid-cols-4 pb-[66px]">
          <div className="pl-3">
            <h3 className="text-sm leading-6 text-[#333333]">haute</h3>
            <p className="mt-4 leading-[22px] text-[#444444]">
              Our mission is to offer you the best
              <br />
              selection of Nordic design, whether well-
              <br />
              established or up-and-coming.
            </p>
          </div>
          {columns.map((c) => (
            <div key={c.title} className="pl-3">
              <h3 className="text-sm leading-6 text-[#333333]">{c.title}</h3>
              <ul className="mt-[15px]">
                {c.links.map((l) => (
                  <li key={l} className="leading-[29px]">
                    <a href="#footer">{l}</a>
                  </li>
                ))}
              </ul>
            </div>
          ))}
        </div>
        <div className="flex h-10 items-center justify-between border-t border-[#e0e0de]">
          <p className="text-[#444444]">Copyright © 2024 Dvago | Powered by Sahil Kumar</p>
          <nav aria-label="Footer" className="flex gap-7">
            {accountLinks.map((l) => (
              <a key={l} href="#footer">
                {l}
              </a>
            ))}
          </nav>
        </div>
      </div>
      <a
        href="#top"
        aria-label="Back to top"
        className="absolute right-4 bottom-4 flex h-8 w-8 items-center justify-center border border-[#ffb53d] bg-[#ff9d00]"
      >
        <svg viewBox="0 0 14 8" className="h-2 w-3.5" fill="none" stroke="#ffffff" strokeWidth="0.9" aria-hidden="true">
          <path d="M1 7.4L7 1L13 7.4" />
        </svg>
      </a>
    </footer>
  );
}

export default function App() {
  return (
    <div className="min-h-screen bg-white font-['Fira_Sans','Noto_Sans',sans-serif]">
      <AdminBar />
      <SiteHeader />
      <div className="flex h-[156px] items-center justify-center">
        <h1 className="text-[29px] leading-9 text-[#222222]">Contact Us</h1>
      </div>
      <MapSection />
      <ContactSection />
      <SiteFooter />
    </div>
  );
}
